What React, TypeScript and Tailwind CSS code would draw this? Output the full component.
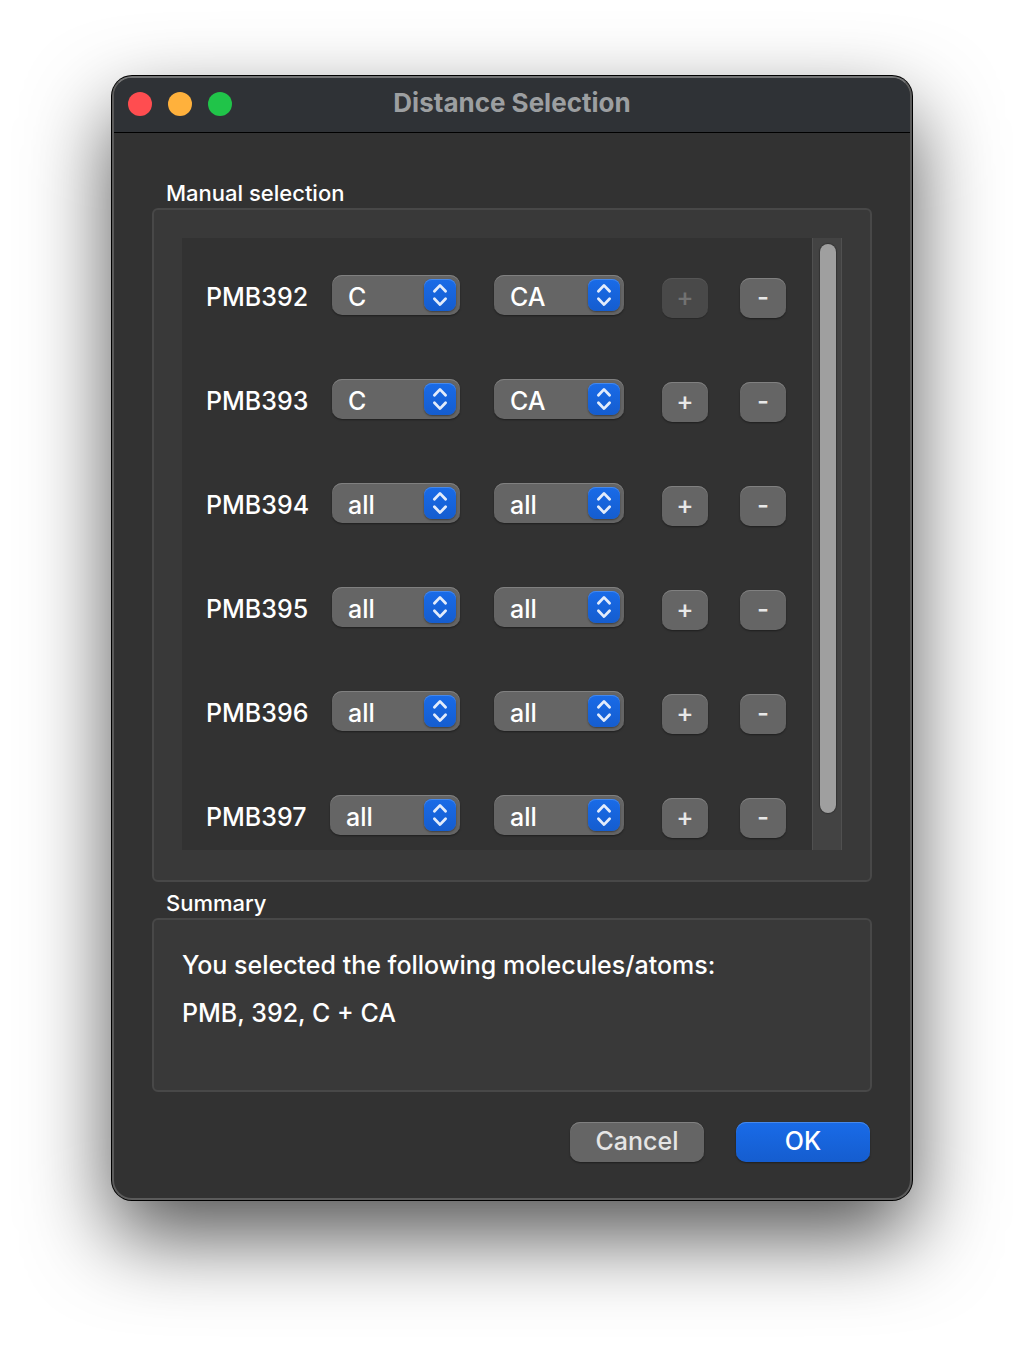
import { useState } from "react";

type Row = { name: string; first: string; second: string; locked?: boolean };

const ROWS: Row[] = [
  { name: "PMB392", first: "C", second: "CA", locked: true },
  { name: "PMB393", first: "C", second: "CA" },
  { name: "PMB394", first: "all", second: "all" },
  { name: "PMB395", first: "all", second: "all" },
  { name: "PMB396", first: "all", second: "all" },
  { name: "PMB397", first: "all", second: "all" },
];

const ATOMS = ["all", "C", "CA"];

function AtomSelect({ id, label, initial, width }: { id: string; label: string; initial: string; width: string }) {
  const [value, setValue] = useState(initial);
  return (
    <div className={`relative h-10 shrink-0 ${width}`}>
      <select
        id={id}
        aria-label={label}
        value={value}
        onChange={(e) => setValue(e.target.value)}
        className="h-10 w-full appearance-none rounded-[10px] bg-[#656565] pt-1 pr-10 pl-4 text-[25px] font-medium text-white shadow-[0_1px_2px_rgba(0,0,0,0.4),inset_0_1px_0_#808080] outline-none"
      >
        {ATOMS.map((a) => (
          <option key={a}>{a}</option>
        ))}
      </select>
      <span className="pointer-events-none absolute top-1 right-1 size-8 rounded-lg bg-linear-to-b from-[#196be8] to-[#155dcf] shadow-[0_1px_2px_rgba(0,0,0,0.4),inset_0_1px_0_#4689ec]">
        <svg viewBox="0 0 32 32" fill="none" stroke="#e3ecfb" strokeWidth="2.8" strokeLinecap="round" strokeLinejoin="round" className="size-8">
          <path d="M10.4 12.2 16 6.4l5.6 5.8M10.4 19.8l5.6 5.8 5.6-5.8" />
        </svg>
      </span>
    </div>
  );
}

function StepButton({ sign, label, disabled }: { sign: "+" | "-"; label: string; disabled?: boolean }) {
  return (
    <button
      type="button"
      aria-label={label}
      disabled={disabled}
      className="flex h-10 w-[46px] shrink-0 items-center justify-center self-end rounded-[10px] bg-[#656565] pb-0.5 text-[26px] leading-[38px] font-medium text-[#e8e8e8] shadow-[0_1px_2px_rgba(0,0,0,0.4),inset_0_1px_0_#808080] disabled:bg-[#494949] disabled:text-[#727272] disabled:shadow-[0_1px_1px_rgba(0,0,0,0.2),inset_0_1px_0_#555555]"
    >
      {sign}
    </button>
  );
}

export default function App() {
  return (
    <main className="min-h-screen overflow-hidden bg-white px-28 pt-[76px] pb-[148px] font-['Inter','Liberation_Sans',sans-serif] font-medium text-white">
      <div
        role="dialog"
        aria-labelledby="dialog-title"
        className="rounded-[20px] border-2 border-[#5b5b5b] border-t-[#737475] bg-[#323232] shadow-[0_0_0_1px_#000,0_36px_84px_rgba(0,0,0,0.68)]"
      >
        <header className="grid grid-cols-[1fr_auto_1fr] items-center rounded-t-[18px] border-b border-black bg-[#2f3236] px-[14px]">
          <div className="flex gap-4 pb-0.5">
            <button type="button" aria-label="Close" className="size-6 rounded-full bg-[#ff4d50]" />
            <button type="button" aria-label="Minimize" className="size-6 rounded-full bg-[#ffb13c]" />
            <button type="button" aria-label="Zoom" className="size-6 rounded-full bg-[#20c449]" />
          </div>
          <h1 id="dialog-title" className="pb-1 text-[26px] leading-[50px] font-bold text-[#9c9fa1]">
            Distance Selection
          </h1>
        </header>

        <div className="px-[38px] pt-12 pb-9">
          <section aria-labelledby="manual">
            <h2 id="manual" className="mb-[3px] pl-[14px] text-[22px] leading-6">
              Manual selection
            </h2>
            <div className="rounded-md border-2 border-[#484848] bg-[#393939] px-7 pt-7 pb-[30px]">
              <div className="flex bg-[#323232]">
                <ul className="flex flex-1 flex-col gap-[61px] pt-[37px] pr-[26px] pb-3 pl-6">
                  {ROWS.map((row, i) => (
                    <li key={row.name} className="flex h-[43px] items-start">
                      <label htmlFor={`${row.name}-first`} className="flex-1 text-[25px] leading-[44px]">
                        {row.name}
                      </label>
                      <AtomSelect
                        id={`${row.name}-first`}
                        label={`${row.name} first atom`}
                        initial={row.first}
                        width={i === ROWS.length - 1 ? "w-[130px]" : "w-32"}
                      />
                      <div className="ml-[34px] flex h-[43px] items-start">
                        <AtomSelect
                          id={`${row.name}-second`}
                          label={`${row.name} second atom`}
                          initial={row.second}
                          width="w-[130px]"
                        />
                      </div>
                      <div className="ml-[38px] flex h-[43px] gap-8">
                        <StepButton sign="+" label={`Add ${row.name}`} disabled={row.locked} />
                        <StepButton sign="-" label={`Remove ${row.name}`} />
                      </div>
                    </li>
                  ))}
                </ul>
                <div className="flex w-[30px] border-r border-l border-[#505050] bg-[#434343] pt-1.5 pr-[5px] pb-[37px] pl-[7px]">
                  <div className="flex-1 rounded-full bg-[#9f9f9f] shadow-[0_0_1px_1px_rgba(0,0,0,0.25)]" />
                </div>
              </div>
            </div>
          </section>

          <section aria-labelledby="summary" className="mt-[9px]">
            <h2 id="summary" className="mb-[3px] pl-[14px] text-[22px] leading-6">
              Summary
            </h2>
            <div className="rounded-md border-2 border-[#484848] bg-[#393939] px-7 pt-[21px] pb-[53px] text-[25px] leading-[48px]">
              <p>You selected the following molecules/atoms:</p>
              <p>PMB, 392, C + CA</p>
            </div>
          </section>

          <div className="mt-[30px] flex justify-end gap-8 pr-0.5 text-[25px]">
            <button
              type="button"
              className="h-10 w-[134px] rounded-[10px] bg-[#656565] text-[#e5e5e5] shadow-[0_1px_2px_rgba(0,0,0,0.4),inset_0_1px_0_#808080]"
            >
              Cancel
            </button>
            <button
              type="button"
              className="h-10 w-[134px] rounded-[10px] bg-linear-to-b from-[#196be8] to-[#155dcf] text-white shadow-[0_1px_2px_rgba(0,0,0,0.4),inset_0_1px_0_#4689ec]"
            >
              OK
            </button>
          </div>
        </div>
      </div>
    </main>
  );
}
